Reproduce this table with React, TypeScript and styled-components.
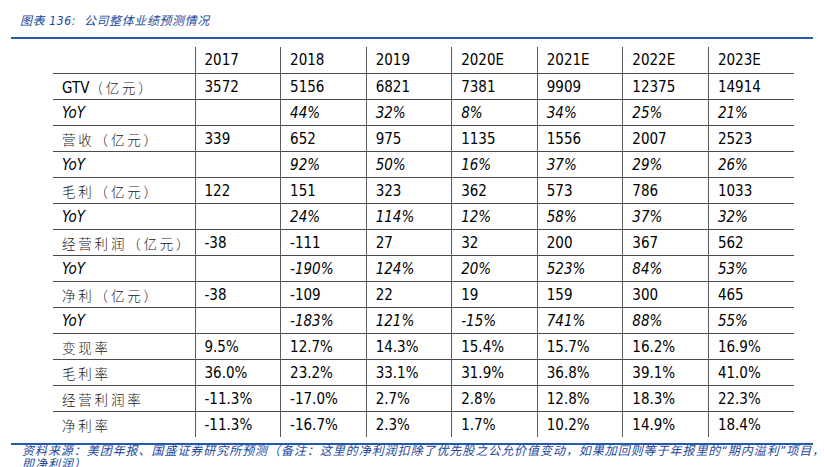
import styled, { createGlobalStyle } from 'styled-components'

const GlobalStyle = createGlobalStyle`
    html, body {
        margin: 0;
        padding: 0;
        background: #ffffff;
        overflow: hidden;
    }
`

const latin = `"DejaVu Sans Condensed", "DejaVu Sans", "Noto Sans CJK SC", sans-serif`

const Page = styled('div')`
    width: 802px;
    padding: 0 11px;
`

const Title = styled('h1')`
    margin: 13px 0 0;
    padding: 0 0 8px 9px;
    font-family: ${latin};
    font-size: 12px;
    line-height: 16px;
    font-weight: normal;
    font-style: italic;
    letter-spacing: 0.6px;
    color: #22479a;
    border-bottom: 2px solid #2458ad;
`

const Table = styled('table')`
    margin: 8px 0 0 42px;
    width: 741px;
    border-collapse: collapse;
    table-layout: fixed;
    font-family: ${latin};
    font-size: 15px;
    color: #000;
`

const HeadCell = styled('th')`
    height: 26px;
    padding: 0 0 0 9px;
    text-align: left;
    font-weight: normal;
    border-right: 1px solid #5a5a5a;

    &:last-child {
        border-right: none;
    }
`

const Cell = styled('td')<{ $italic?: boolean }>`
    height: 25px;
    padding: 0 0 0 9px;
    text-align: left;
    white-space: nowrap;
    font-style: ${(p) => (p.$italic ? 'italic' : 'normal')};
    border-top: 1px solid #4a4a4a;
    border-right: 1px solid #5a5a5a;

    &:last-child {
        border-right: none;
    }
`

const Label = styled('span')`
    font-size: 13.5px;
    font-weight: 300;
    letter-spacing: 2.8px;
    color: #1a1a1a;
`

const Footer = styled('div')`
    margin-top: 6px;
    border-top: 2px solid #2458ad;
    padding-left: 11px;
`

const FooterText = styled('p')`
    margin: 0;
    width: 812px;
    font-family: ${latin};
    font-size: 12px;
    line-height: 13px;
    font-style: italic;
    letter-spacing: 0.95px;
    color: #22479a;
`

const years = ['2017', '2018', '2019', '2020E', '2021E', '2022E', '2023E']

type Row = { label: string; values: string[]; yoy?: boolean }

const rows: Row[] = [
    { label: 'GTV（亿元）', values: ['3572', '5156', '6821', '7381', '9909', '12375', '14914'] },
    { label: 'YoY', yoy: true, values: ['', '44%', '32%', '8%', '34%', '25%', '21%'] },
    { label: '营收（亿元）', values: ['339', '652', '975', '1135', '1556', '2007', '2523'] },
    { label: 'YoY', yoy: true, values: ['', '92%', '50%', '16%', '37%', '29%', '26%'] },
    { label: '毛利（亿元）', values: ['122', '151', '323', '362', '573', '786', '1033'] },
    { label: 'YoY', yoy: true, values: ['', '24%', '114%', '12%', '58%', '37%', '32%'] },
    { label: '经营利润（亿元）', values: ['-38', '-111', '27', '32', '200', '367', '562'] },
    { label: 'YoY', yoy: true, values: ['', '-190%', '124%', '20%', '523%', '84%', '53%'] },
    { label: '净利（亿元）', values: ['-38', '-109', '22', '19', '159', '300', '465'] },
    { label: 'YoY', yoy: true, values: ['', '-183%', '121%', '-15%', '741%', '88%', '55%'] },
    { label: '变现率', values: ['9.5%', '12.7%', '14.3%', '15.4%', '15.7%', '16.2%', '16.9%'] },
    { label: '毛利率', values: ['36.0%', '23.2%', '33.1%', '31.9%', '36.8%', '39.1%', '41.0%'] },
    { label: '经营利润率', values: ['-11.3%', '-17.0%', '2.7%', '2.8%', '12.8%', '18.3%', '22.3%'] },
    { label: '净利率', values: ['-11.3%', '-16.7%', '2.3%', '1.7%', '10.2%', '14.9%', '18.4%'] },
]

const renderLabel = (label: string) => {
    // GTV stays in the latin font size, the chinese part gets the spaced look
    if (label.startsWith('GTV')) {
        return (
            <>
                GTV<Label>{label.slice(3)}</Label>
            </>
        )
    }
    if (label === 'YoY') return label
    return <Label>{label}</Label>
}

const App = () => {
    return (
        <Page>
            <GlobalStyle />
            <Title>图表 136:&nbsp; 公司整体业绩预测情况</Title>
            <Table>
                <colgroup>
                    <col style={{ width: 142 }} />
                    {years.map((y) => (
                        <col key={y} />
                    ))}
                </colgroup>
                <thead>
                    <tr>
                        <HeadCell />
                        {years.map((y) => (
                            <HeadCell key={y}>{y}</HeadCell>
                        ))}
                    </tr>
                </thead>
                <tbody>
                    {rows.map((row, i) => (
                        <tr key={i}>
                            <Cell $italic={row.yoy}>{renderLabel(row.label)}</Cell>
                            {row.values.map((v, j) => (
                                <Cell key={j} $italic={row.yoy}>
                                    {v}
                                </Cell>
                            ))}
                        </tr>
                    ))}
                </tbody>
            </Table>
            <Footer>
                <FooterText>
                    资料来源：美团年报、国盛证券研究所预测（备注：这里的净利润扣除了优先股之公允价值变动，如果加回则等于年报里的“期内溢利”项目，即净利润）
                </FooterText>
            </Footer>
        </Page>
    )
}

export default App
